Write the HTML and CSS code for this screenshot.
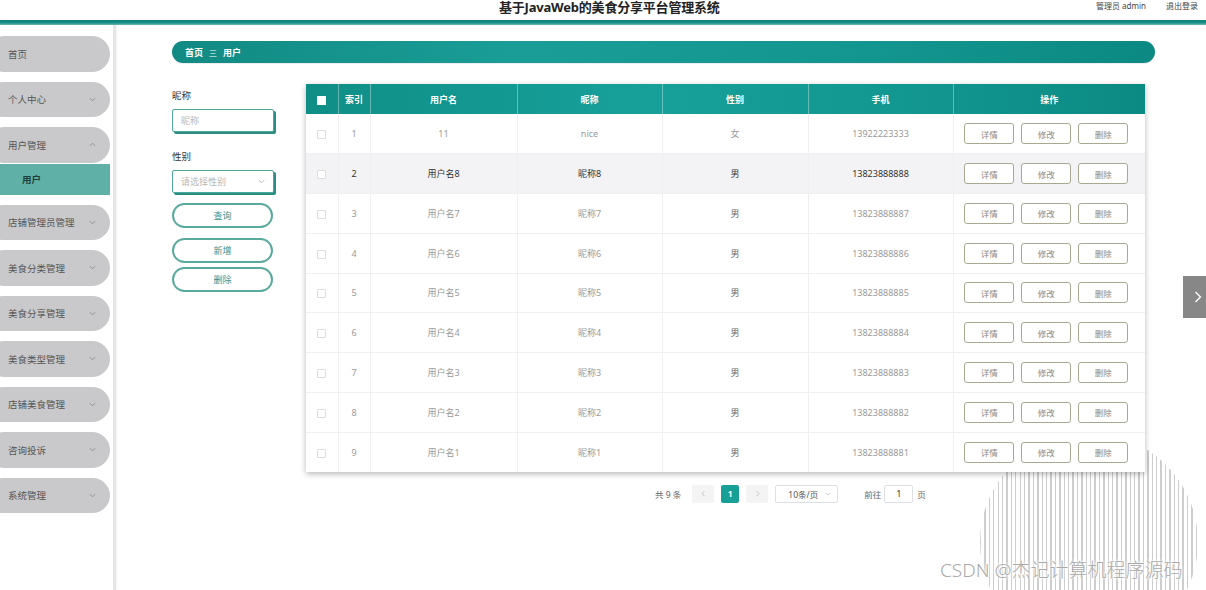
FILE: index.html
```html
<!DOCTYPE html>
<html lang="zh">
<head>
<meta charset="utf-8">
<title>基于JavaWeb的美食分享平台管理系统</title>
<link rel="stylesheet" href="styles.css">
</head>
<body>
<header class="topbar">
  <h1 class="title">基于JavaWeb的美食分享平台管理系统</h1>
  <div class="user-links">
    <span>管理员 admin</span>
    <span class="logout">退出登录</span>
  </div>
</header>
<div class="topline"></div>
<div class="layout">
  <aside class="sidebar">
    <div class="menu-item"><span>首页</span></div>
    <div class="menu-item"><span>个人中心</span><svg class="chev" viewBox="0 0 8 5"><polyline points="1,1 4,4 7,1"/></svg></div>
    <div class="menu-item"><span>用户管理</span><svg class="chev" viewBox="0 0 8 5"><polyline points="1,4 4,1 7,4"/></svg></div>
    <div class="submenu-item">用户</div>
    <div class="menu-item"><span>店铺管理员管理</span><svg class="chev" viewBox="0 0 8 5"><polyline points="1,1 4,4 7,1"/></svg></div>
    <div class="menu-item"><span>美食分类管理</span><svg class="chev" viewBox="0 0 8 5"><polyline points="1,1 4,4 7,1"/></svg></div>
    <div class="menu-item"><span>美食分享管理</span><svg class="chev" viewBox="0 0 8 5"><polyline points="1,1 4,4 7,1"/></svg></div>
    <div class="menu-item"><span>美食类型管理</span><svg class="chev" viewBox="0 0 8 5"><polyline points="1,1 4,4 7,1"/></svg></div>
    <div class="menu-item"><span>店铺美食管理</span><svg class="chev" viewBox="0 0 8 5"><polyline points="1,1 4,4 7,1"/></svg></div>
    <div class="menu-item"><span>咨询投诉</span><svg class="chev" viewBox="0 0 8 5"><polyline points="1,1 4,4 7,1"/></svg></div>
    <div class="menu-item"><span>系统管理</span><svg class="chev" viewBox="0 0 8 5"><polyline points="1,1 4,4 7,1"/></svg></div>
  </aside>
  <main class="content">
    <div class="breadcrumb"><span>首页</span><span class="sep">三</span><span>用户</span></div>
    <div class="workarea">
      <div class="search">
        <div class="label">昵称</div>
        <div class="field placeholder">昵称</div>
        <div class="label label-gap">性别</div>
        <div class="field placeholder select">请选择性别<svg class="sel-chev" viewBox="0 0 8 5"><polyline points="1,1 4,4 7,1"/></svg></div>
        <button class="pill-btn first">查询</button>
        <button class="pill-btn">新增</button>
        <button class="pill-btn tight">删除</button>
      </div>
      <div class="table-wrap">
        <table class="grid">
          <colgroup>
            <col class="c-check"><col class="c-idx"><col class="c-name"><col class="c-nick"><col class="c-sex"><col class="c-phone"><col class="c-ops">
          </colgroup>
          <thead>
            <tr><th><span class="hcheck"></span></th><th>索引</th><th>用户名</th><th>昵称</th><th>性别</th><th>手机</th><th>操作</th></tr>
          </thead>
          <tbody>
            <tr><td><span class="check"></span></td><td>1</td><td>11</td><td>nice</td><td>女</td><td>13922223333</td><td><div class="ops"><button>详情</button><button>修改</button><button>删除</button></div></td></tr>
            <tr class="hover"><td><span class="check"></span></td><td>2</td><td>用户名8</td><td>昵称8</td><td class="sex">男</td><td>13823888888</td><td><div class="ops"><button>详情</button><button>修改</button><button>删除</button></div></td></tr>
            <tr><td><span class="check"></span></td><td>3</td><td>用户名7</td><td>昵称7</td><td class="sex">男</td><td>13823888887</td><td><div class="ops"><button>详情</button><button>修改</button><button>删除</button></div></td></tr>
            <tr><td><span class="check"></span></td><td>4</td><td>用户名6</td><td>昵称6</td><td class="sex">男</td><td>13823888886</td><td><div class="ops"><button>详情</button><button>修改</button><button>删除</button></div></td></tr>
            <tr><td><span class="check"></span></td><td>5</td><td>用户名5</td><td>昵称5</td><td class="sex">男</td><td>13823888885</td><td><div class="ops"><button>详情</button><button>修改</button><button>删除</button></div></td></tr>
            <tr><td><span class="check"></span></td><td>6</td><td>用户名4</td><td>昵称4</td><td class="sex">男</td><td>13823888884</td><td><div class="ops"><button>详情</button><button>修改</button><button>删除</button></div></td></tr>
            <tr><td><span class="check"></span></td><td>7</td><td>用户名3</td><td>昵称3</td><td class="sex">男</td><td>13823888883</td><td><div class="ops"><button>详情</button><button>修改</button><button>删除</button></div></td></tr>
            <tr><td><span class="check"></span></td><td>8</td><td>用户名2</td><td>昵称2</td><td class="sex">男</td><td>13823888882</td><td><div class="ops"><button>详情</button><button>修改</button><button>删除</button></div></td></tr>
            <tr><td><span class="check"></span></td><td>9</td><td>用户名1</td><td>昵称1</td><td class="sex">男</td><td>13823888881</td><td><div class="ops"><button>详情</button><button>修改</button><button>删除</button></div></td></tr>
          </tbody>
        </table>
        <div class="pager">
          <span class="total">共 9 条</span>
          <span class="pbtn"><svg viewBox="0 0 6 8"><polyline points="4,1 1.5,4 4,7"/></svg></span>
          <span class="page active">1</span>
          <span class="pbtn"><svg viewBox="0 0 6 8"><polyline points="2,1 4.5,4 2,7"/></svg></span>
          <span class="psize">10条/页<svg viewBox="0 0 8 5"><polyline points="1,1 4,4 7,1"/></svg></span>
          <span class="goto">前往</span>
          <span class="pinput">1</span>
          <span class="goto-end">页</span>
        </div>
      </div>
    </div>
  </main>
</div>
<div class="deco-circle"></div>
<div class="side-arrow"><svg viewBox="0 0 12 16"><polyline points="3,2 9,8 3,14"/></svg></div>
<div class="watermark">CSDN @杰记计算机程序源码</div>
</body>
</html>
```
FILE: styles.css
```css
* { box-sizing: border-box; }
html, body { margin: 0; padding: 0; }
body {
  width: 1206px;
  height: 590px;
  overflow: hidden;
  position: relative;
  background: #fff;
  font-family: "Noto Sans", "Noto Sans CJK SC", sans-serif;
  color: #555;
}

.topbar {
  height: 20px;
  display: flex;
  align-items: flex-start;
  padding-left: 499px;
  padding-right: 8px;
}
.title {
  margin: 0;
  font-size: 13px;
  font-weight: 700;
  color: #222;
  letter-spacing: -0.2px;
  line-height: 15px;
}
.user-links {
  margin-left: auto;
  display: flex;
  gap: 20px;
  font-size: 8px;
  line-height: 12px;
  color: #444;
}
.topline {
  height: 5px;
  background: linear-gradient(180deg, #0f7f77 0%, #178f86 55%, #6fbdb3 100%);
}

.layout {
  display: flex;
  height: 565px;
}
.sidebar {
  width: 116px;
  flex: none;
  border-right: 3px solid #e6e6e6;
  box-shadow: 1px 0 2px rgba(0,0,0,0.06);
  padding-top: 11px;
  display: flex;
  flex-direction: column;
  gap: 10px;
  overflow: hidden;
}
.menu-item {
  width: 124px;
  margin-left: -14px;
  height: 35.5px;
  border-radius: 18px;
  background: #c9c9cb;
  display: flex;
  align-items: center;
  padding-left: 22px;
  padding-right: 14px;
  font-size: 9.5px;
  color: #555;
  flex: none;
}
.menu-item .chev {
  margin-left: auto;
  width: 7px;
  height: 5px;
  fill: none;
  stroke: #888;
  stroke-width: 1;
}
.submenu-item {
  width: 110px;
  height: 31px;
  margin-top: -9px;
  margin-bottom: 0;
  background: #5fb0a7;
  color: #1e3f3b;
  font-size: 9.5px;
  font-weight: 700;
  display: flex;
  align-items: center;
  padding-left: 22px;
  flex: none;
}

.content {
  flex: 1;
  padding: 16px 51px 0 56px;
}
.breadcrumb {
  height: 22px;
  border-radius: 11px;
  background: linear-gradient(90deg, #118a83 0%, #1a9d97 35%, #149690 70%, #0b8982 100%);
  display: flex;
  align-items: center;
  gap: 6px;
  padding-left: 13px;
  color: #fff;
  font-size: 9px;
  font-weight: 700;
  box-shadow: 0 1px 1px rgba(0,0,0,0.08);
}
.breadcrumb .sep { font-size: 8px; font-weight: 400; }

.workarea {
  display: flex;
  margin-top: 21px;
}
.search {
  width: 104px;
  margin-right: 30px;
  padding-top: 6px;
  display: flex;
  flex-direction: column;
  flex: none;
}
.label {
  font-size: 9.5px;
  color: #333;
  line-height: 12px;
  margin-bottom: 7px;
}
.label-gap { margin-top: 17px; }
.field {
  width: 102px;
  height: 23px;
  border: 1.5px solid #4fa89c;
  border-radius: 2px;
  box-shadow: 2px 2px 0 #2a8d82;
  background: #fff;
  font-size: 9px;
  color: #b8b8b8;
  display: flex;
  align-items: center;
  padding-left: 8px;
  padding-right: 8px;
  margin-bottom: 2px;
}
.sel-chev {
  margin-left: auto;
  width: 7px;
  height: 5px;
  fill: none;
  stroke: #aaa;
  stroke-width: 1;
}
.pill-btn {
  width: 101px;
  height: 25px;
  border: 2px solid #5aa99d;
  border-radius: 13px;
  background: #fff;
  color: #3f8f86;
  font-family: inherit;
  font-size: 9px;
  padding: 0;
  margin-top: 10px;
}
.pill-btn.first { margin-top: 8px; }
.pill-btn.tight { margin-top: 4px; }

.table-wrap {
  width: 839px;
  flex: none;
}
.grid {
  width: 839px;
  border-collapse: collapse;
  table-layout: fixed;
  background: #fff;
  box-shadow: 0 2px 6px rgba(0,0,0,0.28);
}
.c-check { width: 32px; }
.c-idx { width: 32px; }
.c-name { width: 147px; }
.c-nick { width: 145px; }
.c-sex { width: 146px; }
.c-phone { width: 145px; }
.c-ops { width: 192px; }
.grid thead tr {
  background: linear-gradient(90deg, #0f8e86 0%, #17a09a 40%, #12958f 75%, #0b8a83 100%);
}
.grid th {
  height: 30px;
  color: #fff;
  font-size: 9px;
  font-weight: 700;
  text-align: center;
  border-right: 1px solid rgba(255,255,255,0.35);
  padding: 0;
}
.grid th:last-child { border-right: none; }
.hcheck {
  display: inline-block;
  width: 9px;
  height: 9px;
  background: #fff;
  vertical-align: middle;
}
.grid td {
  height: 39.75px;
  padding: 0;
  text-align: center;
  font-size: 9px;
  color: #9a9a9a;
  border-right: 1px solid #efefef;
  border-bottom: 1px solid #f0f0f0;
}
.grid td:last-child { border-right: none; }
.grid tbody tr:last-child td { border-bottom: none; }
.grid td.sex { color: #666; }
.grid tr.hover td { background: #f3f3f6; color: #333; }
.check {
  display: inline-block;
  width: 9px;
  height: 9px;
  border: 1px solid #ddd;
  border-radius: 1px;
  background: #fff;
  vertical-align: middle;
}
.ops {
  display: flex;
  justify-content: center;
  gap: 7px;
  padding-right: 6px;
}
.ops button {
  width: 50px;
  height: 21px;
  border: 1px solid #a9a993;
  border-radius: 3px;
  background: #fff;
  color: #8a8a8a;
  font-family: inherit;
  font-size: 8.5px;
  padding: 0;
}

.pager {
  display: flex;
  align-items: center;
  padding-left: 349px;
  margin-top: 13px;
  height: 18px;
  font-size: 8.5px;
  color: #666;
}
.total { margin-right: 11px; }
.pbtn {
  width: 22px;
  height: 18px;
  background: #f4f4f5;
  border-radius: 2px;
  display: flex;
  align-items: center;
  justify-content: center;
}
.pbtn svg {
  width: 5px;
  height: 7px;
  fill: none;
  stroke: #bbb;
  stroke-width: 1;
}
.page {
  width: 18px;
  height: 18px;
  margin: 0 7px;
  background: #17a096;
  color: #fff;
  font-weight: 700;
  border-radius: 2px;
  display: flex;
  align-items: center;
  justify-content: center;
}
.psize {
  margin-left: 7px;
  width: 63px;
  height: 18px;
  border: 1px solid #dcdfe6;
  border-radius: 2px;
  display: flex;
  align-items: center;
  padding-left: 12px;
  padding-right: 6px;
  color: #555;
}
.psize svg {
  margin-left: auto;
  width: 6px;
  height: 4px;
  fill: none;
  stroke: #bbb;
  stroke-width: 1;
}
.goto { margin-left: 26px; margin-right: 3px; }
.pinput {
  width: 29px;
  height: 18px;
  border: 1px solid #dcdfe6;
  border-radius: 2px;
  display: flex;
  align-items: center;
  justify-content: center;
  color: #333;
}
.goto-end { margin-left: 4px; }

.deco-circle {
  position: absolute;
  left: 980px;
  top: 433px;
  width: 218px;
  height: 157px;
  clip-path: circle(109px at 109px 109px);
  background: repeating-linear-gradient(90deg, #cdcdcd 0 1.3px, transparent 1.3px 4.4px);
  z-index: -1;
}
.side-arrow {
  position: absolute;
  left: 1183px;
  top: 276px;
  width: 23px;
  height: 42px;
  background: #878787;
  display: flex;
  align-items: center;
  justify-content: center;
}
.side-arrow svg {
  width: 10px;
  height: 14px;
  fill: none;
  stroke: #fff;
  stroke-width: 1.6;
  margin-left: 6px;
}
.watermark {
  position: absolute;
  left: 940px;
  top: 558px;
  font-size: 19px;
  line-height: 24px;
  color: #a9a9a9;
  font-weight: 300;
  font-family: "Noto Sans", "Noto Sans CJK SC", sans-serif;
  text-shadow: 0 0 2px #fff, 0 0 3px #fff, 0 0 4px #fff;
  letter-spacing: 0;
}
```
